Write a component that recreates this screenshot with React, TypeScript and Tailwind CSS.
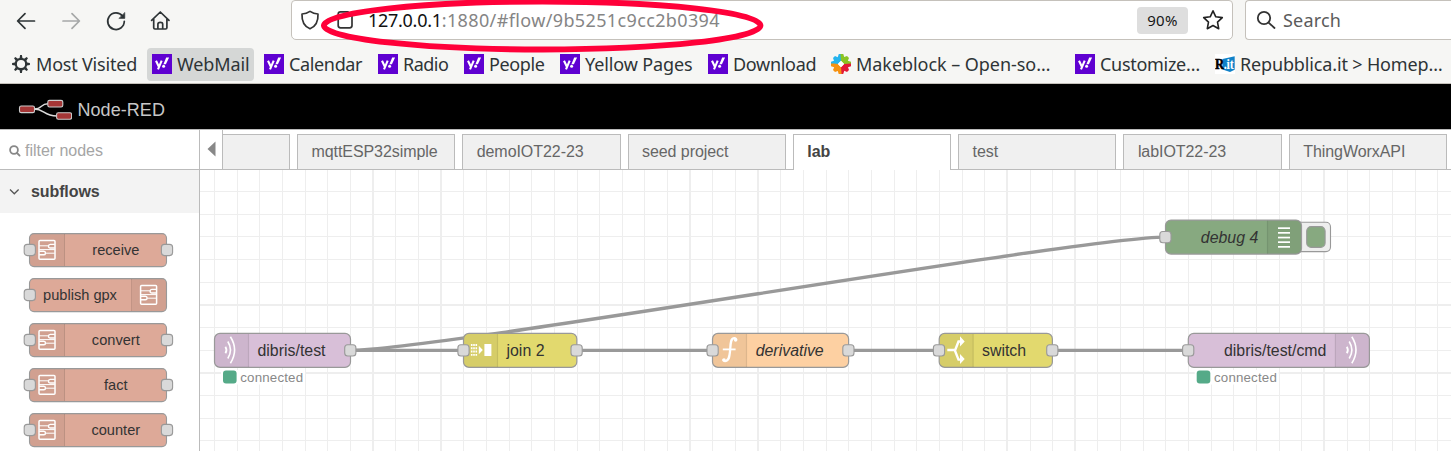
import React from "react";

const chromeFont = "font-['Noto_Sans',sans-serif]";

function YahooIcon() {
  return (
    <svg width="20" height="20" viewBox="0 0 20 20" className="shrink-0">
      <rect width="20" height="20" fill="#5f01d1" />
      <path d="M4 6.7l2.9 6.1M9.7 6.7L6 15.4" stroke="#fff" strokeWidth="2.1" fill="none" />
      <path d="M14.2 3.5h2.9l-3.2 6.7h-2.5z" fill="#fff" />
      <circle cx="11.6" cy="12.2" r="1.5" fill="#fff" />
    </svg>
  );
}

function GearIcon() {
  return (
    <svg width="18" height="18" viewBox="-9 -9 18 18" className="shrink-0">
      <circle r="5.2" fill="none" stroke="#2e3436" strokeWidth="2.2" />
      {[0, 45, 90, 135, 180, 225, 270, 315].map((a) => (
        <path key={a} d="M-1.5 -5.8L-.9 -8.9H.9L1.5 -5.8Z" fill="#2e3436" transform={`rotate(${a})`} />
      ))}
    </svg>
  );
}

function MakeblockIcon() {
  return (
    <svg width="20" height="20" viewBox="-10 -10 20 20" className="shrink-0">
      {[
        ["#25b4ee", 0],
        ["#8ac423", 90],
        ["#e31937", 180],
        ["#f69211", 270],
      ].map(([c, a]) => (
        <path
          key={a}
          transform={`rotate(${a})`}
          d="M0 -3L-3 0L-10 .6V-2.3L-7 -3.2L-8 -6L-6 -8L-3.3 -6.8L-2.2 -10H.6L.4 -7Z"
          fill={c as string}
        />
      ))}
      <path d="M0 -3.2L3.2 0L0 3.2L-3.2 0Z" fill="#fff" />
    </svg>
  );
}

function RepubblicaIcon() {
  return (
    <svg width="20" height="20" viewBox="0 0 20 20" className="shrink-0">
      <rect width="20" height="20" fill="#fff" />
      <path d="M7.5 5L19.7 2.3V15.7L15 18L7.5 15.5Z" fill="#1182c8" />
      <text x="0" y="15.2" fontFamily="Liberation Serif" fontWeight="700" fontSize="15.5" textLength="9" lengthAdjust="spacingAndGlyphs" stroke="#000" strokeWidth=".6">R</text>
      <text x="8.7" y="14.6" fontFamily="Liberation Serif" fontWeight="700" fontSize="14" fill="#fff" textLength="10" lengthAdjust="spacingAndGlyphs">.it</text>
    </svg>
  );
}

function Bookmark({ icon, label, className }: { icon: React.ReactNode; label: string; className: string }) {
  return (
    <div className={`flex h-[33px] shrink-0 items-center gap-[5px] rounded-[4px] pl-[5px] ${className}`}>
      {icon}
      <span className="whitespace-nowrap pt-px">{label}</span>
    </div>
  );
}

function Toolbar() {
  return (
    <div className="flex h-10 shrink-0 items-start">
      <div className="flex h-10 w-[291px] shrink-0 items-center pl-4 pt-px">
        <svg width="160" height="22" viewBox="16 10 160 22" fill="none" stroke="#2e3436" strokeWidth="1.7" strokeLinecap="round" strokeLinejoin="round">
          <path d="M34.5 21H17.8M25 13.6L17.6 21L25 28.4" />
          <path d="M63 21H79.3M72 13.6L79.4 21L72 28.4" stroke="#a6a8a8" />
          <path d="M122.6 16.2A8.3 8.3 0 1 0 124.3 21.3" />
          <path d="M124.8 12.8V18.4H119.2Z" fill="#2e3436" strokeWidth=".6" />
          <path d="M151.6 20.3L160.3 12L169 20.3M153.7 19V27.7Q153.7 29 155 29H165.6Q166.9 29 166.9 27.7V19M157.9 29V24.2Q157.9 22.3 160.3 22.3T162.7 24.2V29" />
        </svg>
      </div>
      <div className="flex h-10 w-[942px] shrink-0 items-center rounded-b-[5px] rounded-t-[4px] border border-[#c5c1bb] bg-white">
        <svg width="66" height="24" viewBox="292 8 66 24" className="shrink-0" fill="none" stroke="#333" strokeWidth="1.7" strokeLinejoin="round">
          <path d="M310 11.4C307 13.5 304.5 14 302 14C301.7 20.5 303.6 26.2 310 28.8C316.4 26.2 318.3 20.5 318 14C315.5 14 313 13.5 310 11.4Z" />
          <path d="M340.5 11.8H348L352 15.5V25.5Q352 27.8 349.7 27.8H340.5Q338.2 27.8 338.2 25.5V14Q338.2 11.8 340.5 11.8Z" />
        </svg>
        <span className="ml-[10px] mt-px whitespace-nowrap text-[18px] tracking-[0.37px] text-[#858585]">
          <span className="tracking-[-0.28px] text-[#111]">127.0.0.1</span>:1880/#flow/9b5251c9cc2b0394
        </span>
        <span className="ml-auto flex h-[27px] w-[51px] items-center justify-center rounded-[4px] bg-[#dedede] pt-px text-[15px] tracking-[0.3px] text-[#161616]">90%</span>
        <svg width="22" height="22" viewBox="0 0 22 22" className="ml-[14px] mr-[8px]" fill="none" stroke="#222" strokeWidth="1.6" strokeLinejoin="round">
          <path d="M11 1.8L13.8 7.8L20.3 8.6L15.5 13.1L16.7 19.7L11 16.5L5.3 19.7L6.5 13.1L1.7 8.6L8.2 7.8Z" />
        </svg>
      </div>
      <div className="ml-3 flex h-10 grow items-center rounded-l-[4px] border border-r-0 border-[#c5c1bb] bg-white">
        <svg width="20" height="20" viewBox="0 0 20 20" className="ml-[10px] shrink-0" fill="none" stroke="#333" strokeWidth="1.8" strokeLinecap="round">
          <circle cx="8" cy="8" r="6.2" />
          <path d="M12.6 12.6L18.5 18" />
        </svg>
        <span className="mt-px ml-[7px] text-[18px] tracking-[0.2px] text-[#5b5b5b]">Search</span>
      </div>
    </div>
  );
}

function BookmarksBar() {
  return (
    <div className="flex h-[43px] shrink-0 items-center overflow-hidden pt-[5px] pl-[7px] text-[18px] text-[#2e3436]">
      <Bookmark icon={<GearIcon />} label="Most Visited" className="w-[140px] gap-[6px] tracking-[-0.2px]" />
      <Bookmark icon={<YahooIcon />} label="WebMail" className="w-[107px] bg-[#d5d7d6] tracking-[-0.1px]" />
      <Bookmark icon={<YahooIcon />} label="Calendar" className="ml-[5px] w-[114px] tracking-[-0.35px]" />
      <Bookmark icon={<YahooIcon />} label="Radio" className="w-[86px] tracking-[-0.5px]" />
      <Bookmark icon={<YahooIcon />} label="People" className="w-[96px] tracking-[-0.4px]" />
      <Bookmark icon={<YahooIcon />} label="Yellow Pages" className="w-[148px] tracking-[-0.12px]" />
      <Bookmark icon={<YahooIcon />} label="Download" className="w-[123px] tracking-[-0.3px]" />
      <Bookmark icon={<MakeblockIcon />} label="Makeblock – Open-so…" className="w-[244px] tracking-[-0.05px]" />
      <Bookmark icon={<YahooIcon />} label="Customize…" className="w-[140px] tracking-[-0.3px]" />
      <Bookmark icon={<RepubblicaIcon />} label="Repubblica.it > Homep…" className="w-[240px] tracking-[-0.15px]" />
    </div>
  );
}

function Header() {
  return (
    <div className="flex h-[45px] shrink-0 items-center bg-black pl-[18px]">
      <svg width="54" height="21" viewBox="18 98 54 21" className="mt-[5px] shrink-0">
        <path d="M34 108C43 108 40 102.7 48 102.7M34 108C45 108 43 115 57 115" fill="none" stroke="#ddd" strokeWidth="1.4" />
        <g fill="#a43636" stroke="#ccc" strokeWidth="1.1">
          <rect x="19.5" y="105" width="15" height="6.6" rx="1.7" />
          <rect x="47.8" y="99.4" width="15" height="6.6" rx="1.7" />
          <rect x="56.6" y="111.7" width="15" height="6.6" rx="1.7" />
        </g>
      </svg>
      <span className="mt-[7px] ml-[5.5px] text-[18px] leading-[22px] tracking-[0.05px] text-[#c7c7c7]">Node-RED</span>
    </div>
  );
}

function SubflowGlyph({ x, y }: { x: number; y: number }) {
  return (
    <g transform={`translate(${x} ${y})`} fill="none" stroke="#fff" strokeWidth="1.4">
      <rect x=".8" y=".8" width="16" height="18.6" rx="1" strokeWidth="1.5" />
      <path d="M1 6H10.3M1 9.8H16.6M7.3 13.4H16.6" strokeWidth="1" />
      <path d="M16.6 4.6H12Q10.3 4.6 10.3 6.4T12 8.2H16.6M1 11.4H5.6Q7.3 11.4 7.3 13.2T5.6 15H1" />
    </g>
  );
}

function Port({ x, y }: { x: number; y: number }) {
  return <rect x={x - 5.6} y={y - 5.6} width="11.2" height="11.2" rx="3" fill="#d9d9d9" stroke="#999" strokeWidth="1.1" />;
}

function PaletteNode({ label, right = false }: { label: string; right?: boolean }) {
  return (
    <svg width="152" height="35" viewBox="0 0 152 35" className="block shrink-0">
      <rect x="6.5" y=".6" width="137" height="33" rx="4.5" fill="#dda998" stroke="#999" strokeWidth="1.1" />
      {right ? (
        <path d="M109 1.2H139Q143 1.2 143 5V29Q143 33 139 33H109Z" fill="#000" fillOpacity=".05" />
      ) : (
        <path d="M41.5 1.2H11Q7 1.2 7 5V29Q7 33 11 33H41.5Z" fill="#000" fillOpacity=".05" />
      )}
      <path d={right ? "M108.5 1V33" : "M41.5 1V33"} stroke="#000" strokeOpacity=".12" />
      <SubflowGlyph x={right ? 116.8 : 15.2} y={6.8} />
      <text x={right ? 57 : 92.8} y="22" textAnchor="middle" fontSize="14.6" fill="#333" fontFamily="Liberation Sans">{label}</text>
      <Port x={6.8} y={17} />
      {!right && <Port x={144} y={17} />}
    </svg>
  );
}

function Palette() {
  return (
    <div className="flex w-[200px] shrink-0 flex-col overflow-hidden border-r border-[#bbb] bg-white">
      <div className="flex h-[40px] shrink-0 items-center border-b border-[#bbb] pl-[9px] pt-[2px]">
        <svg width="12" height="12" viewBox="0 0 12 12" fill="none" stroke="#888" strokeWidth="1.8" strokeLinecap="round">
          <circle cx="5" cy="5" r="3.9" />
          <path d="M8 8L10.6 10.6" />
        </svg>
        <span className="ml-[4px] text-[16px] tracking-[-0.03px] text-[#a5a5a5]">filter nodes</span>
      </div>
      <div className="flex h-[43px] shrink-0 items-center bg-[#f3f3f3] pl-[9px]">
        <svg width="11" height="8" viewBox="0 0 11 8" fill="none" stroke="#555" strokeWidth="1.3">
          <path d="M1 1.5L5.3 5.8L9.6 1.5" />
        </svg>
        <span className="ml-[11px] text-[16px] font-bold tracking-[-0.1px] text-[#444]">subflows</span>
      </div>
      <div className="flex flex-col gap-[10px] pt-5 pl-[23px]">
        <PaletteNode label="receive" />
        <PaletteNode label="publish gpx" right />
        <PaletteNode label="convert" />
        <PaletteNode label="fact" />
        <PaletteNode label="counter" />
      </div>
    </div>
  );
}

const tabs = ["mqttESP32simple", "demoIOT22-23", "seed project", "lab", "test", "labIOT22-23", "ThingWorxAPI"];

function Tabs() {
  return (
    <div className="flex h-[40px] shrink-0 items-end border-b border-[#bbb] bg-white text-[16px] tracking-[-0.06px] text-[#666]">
      <div className="flex h-[39px] w-[23px] shrink-0 items-center border-r border-[#bbb] pl-[7px] pb-[2px]">
        <svg width="9" height="16" viewBox="0 0 9 16"><path d="M8.5 .5V15.5L.5 8Z" fill="#888" /></svg>
      </div>
      <div className="mr-[7px] h-[35px] w-[67px] shrink-0 border-t border-r border-[#bbb] bg-[#f0f0f0]" />
      {tabs.map((t) => (
        <div
          key={t}
          className={
            t === "lab"
              ? "mr-[7px] -mb-px flex h-[36px] w-[158.3px] shrink-0 items-center border border-b-0 border-[#bbb] bg-white pl-[13.4px] pb-[2px] font-bold text-[#444]"
              : "mr-[7px] flex h-[35px] w-[158.3px] shrink-0 items-center border border-b-0 border-[#bbb] bg-[#f0f0f0] pl-[13.4px]"
          }
        >
          {t}
        </div>
      ))}
    </div>
  );
}

type FlowNode = { x: number; y: number; w: number; color: string; label: string; tx: number; right?: boolean; italic?: boolean; ports: number[] };

const nodes: FlowNode[] = [
  { x: 214.5, y: 333.4, w: 136, color: "#d8bfd8", label: "dibris/test", tx: 257.5, ports: [350.3] },
  { x: 463.5, y: 333.4, w: 113.3, color: "#e2d96e", label: "join 2", tx: 506.5, ports: [463.5, 576.6] },
  { x: 712.5, y: 333.4, w: 136.1, color: "#fdd0a2", label: "derivative", tx: 755.7, italic: true, ports: [712.6, 848.4] },
  { x: 939.2, y: 333.4, w: 113.2, color: "#e2d96e", label: "switch", tx: 982, ports: [939, 1052.3] },
  { x: 1188.3, y: 333.4, w: 181.1, color: "#d8bfd8", label: "dibris/test/cmd", tx: 1224, right: true, ports: [1188.2] },
  { x: 1165.5, y: 220.1, w: 136, color: "#87a980", label: "debug 4", tx: 1200.8, right: true, italic: true, ports: [1165.4] },
];

function Status({ x }: { x: number }) {
  return (
    <g>
      <rect x={x - 2} y="370" width="84" height="14.5" fill="#fff" />
      <rect x={x} y="370.4" width="13.6" height="13.2" rx="3" fill="#5a8" />
      <text x={x + 17.3} y="382" fontSize="13.3" fill="#888" textLength="62.8">connected</text>
    </g>
  );
}

const thickColumns = [7, 10, 21, 24, 35, 38, 49];
const thickRows = [5, 8];

function Canvas() {
  const vertical = Array.from({ length: 55 }, (_, i) => Math.floor(214.6 + i * 22.65));
  const horizontal = Array.from({ length: 12 }, (_, i) => Math.floor(191.5 + i * 22.65));
  return (
    <svg width="1251" height="281" viewBox="200 170 1251 281" className="block" fontFamily="Liberation Sans">
      <rect x="200" y="170" width="1251" height="281" fill="#fff" />
      <g fill="#eee">
        {vertical.map((x, i) => {
          const thick = thickColumns.includes(i);
          return <rect key={x} x={thick ? x - 1 : x} y="170" width={thick ? 2 : 1} height="281" />;
        })}
        {horizontal.map((y, i) => (
          <rect key={y} x="200" y={y} width="1251" height={thickRows.includes(i) ? 2 : 1} />
        ))}
      </g>
      <g fill="none" stroke="#999" strokeWidth="3.3">
        <path d="M350.5 350.4H463M577 350.4H712M849 350.4H939M1052.5 350.4H1188" />
        <path d="M350.5 350.4C435.5 350.4 1080.4 237.1 1165.4 237.1" />
      </g>
      <rect x="1292" y="222.3" width="38.5" height="29.3" rx="4.5" fill="#eee" stroke="#999" strokeWidth="1.1" />
      <rect x="1306.7" y="226.6" width="18.4" height="20.8" rx="4.5" fill="#87a980" stroke="#999" strokeWidth="1.1" />
      {nodes.map((n) => {
        const sx = n.right ? n.x + n.w - 34 : n.x + 34;
        return (
          <g key={n.label}>
            <rect x={n.x} y={n.y} width={n.w} height="34" rx="5.5" fill={n.color} stroke="#999" strokeWidth="1.2" />
            <path
              d={n.right ? `M${sx} ${n.y + .6}h29q4.5 0 4.5 4.5v24q0 4.5 -4.5 4.5h-29z` : `M${sx} ${n.y + .6}h-29q-4.5 0 -4.5 4.5v24q0 4.5 4.5 4.5h29z`}
              fill="#000"
              fillOpacity=".05"
            />
            <path d={`M${sx} ${n.y + .6}v33`} stroke="#000" strokeOpacity=".1" strokeWidth="1.2" />
            <text x={n.tx} y={n.y + 22.5} fontSize="15.9" fill="#333" fontStyle={n.italic ? "italic" : "normal"}>{n.label}</text>
            {n.ports.map((p) => <Port key={p} x={p} y={n.y + 17} />)}
          </g>
        );
      })}
      <g fill="none" stroke="#fff" strokeWidth="1.6">
        <path d="M225.4 346.7Q227.5 350 225.4 353.3" strokeWidth="1.8" />
        <path d="M227.8 341.5Q233.2 350 227.8 358.5M230.4 336.8Q238.8 350 230.4 363.3" />
        <path d="M1346.8 346.7Q1348.9 350 1346.8 353.3" strokeWidth="1.8" />
        <path d="M1349.2 341.5Q1354.6 350 1349.2 358.5M1351.8 336.8Q1360.2 350 1351.8 363.3" />
      </g>
      <g fill="#fff">
        {[344, 347.3, 350.6, 353.9].map((y) => (
          <path key={y} d={`M470.9 ${y}h1.6v1.9h-1.6zM473.2 ${y}h1.6v1.9h-1.6zM475.5 ${y}h1.6v1.9h-1.6z`} />
        ))}
        <path d="M478.8 345.7V354.3L482.8 350ZM484.4 344H491.4V356H484.4Z" />
        {[227.3, 232, 236.7, 241.3, 246].map((y) => <rect key={y} x="1278" y={y} width="12" height="1.7" />)}
      </g>
      <g fill="none" stroke="#fff">
        <path d="M736.3 340.3Q736.2 337.8 733.8 338.2C729.5 338.8 731 348 729.5 355C728.7 361.3 724.4 362.6 723.2 359.4" strokeWidth="2.3" />
        <path d="M722.8 349.4H735.6" strokeWidth="1.8" />
        <path d="M947.3 350H955.2L958.5 341.5H961M954.7 350L958.5 359.6H961" strokeWidth="2.4" />
      </g>
      <g fill="#fff">
        <circle cx="735.6" cy="340" r="1.7" />
        <circle cx="724" cy="360" r="1.8" />
        <path d="M960 336.2L964.7 341.4L960 346.4ZM960 354L964.7 358.9L960 364Z" />
      </g>
      <Status x={223} />
      <Status x={1196.7} />
    </svg>
  );
}

export default function App() {
  return (
    <div className="relative flex h-[451px] w-[1451px] flex-col overflow-hidden bg-[#f6f6f4] font-['Liberation_Sans',sans-serif]">
      <div className={`${chromeFont} flex h-[84px] shrink-0 flex-col border-b border-[#c5c1bb]`}>
        <Toolbar />
        <BookmarksBar />
      </div>
      <Header />
      <div className="h-px shrink-0 bg-[#bbb]" />
      <div className="flex h-[321px] shrink-0">
        <Palette />
        <div className="flex w-[1251px] flex-col">
          <Tabs />
          <Canvas />
        </div>
      </div>
      <svg className="pointer-events-none absolute top-0 left-[316px]" width="452" height="56" viewBox="316 0 452 56">
        <ellipse cx="542.2" cy="25.5" rx="218.3" ry="24" fill="none" stroke="#ff0039" strokeWidth="5.8" />
      </svg>
    </div>
  );
}
